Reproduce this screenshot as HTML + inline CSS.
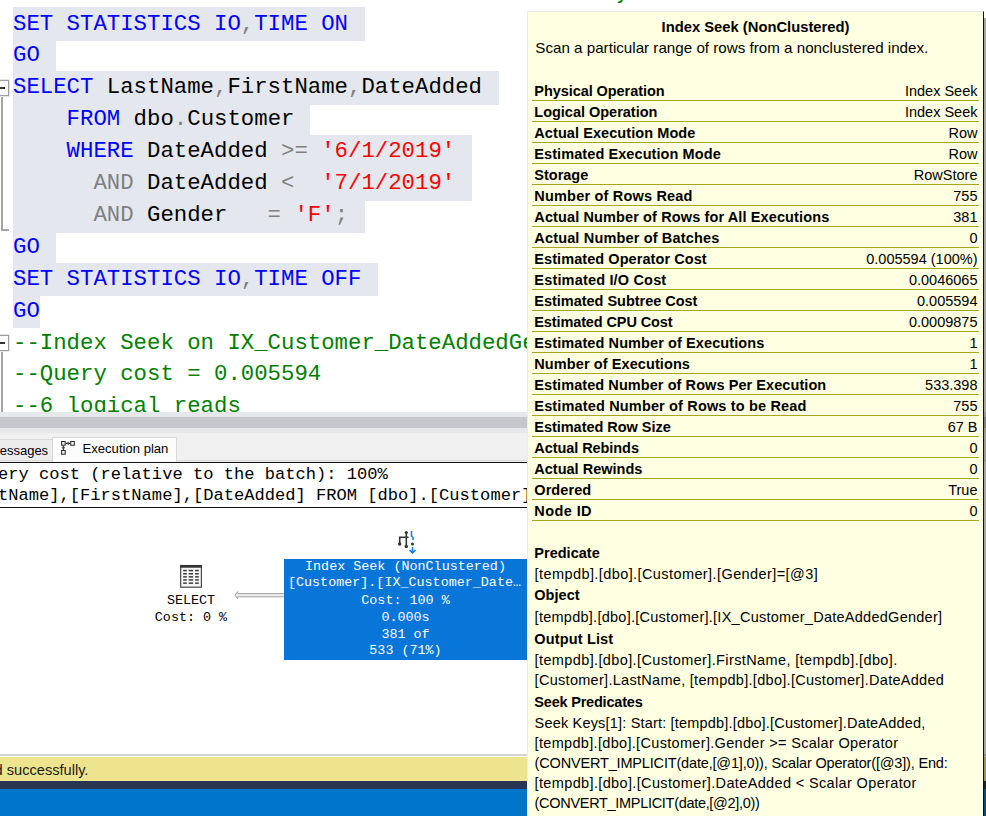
<!DOCTYPE html>
<html><head><meta charset="utf-8">
<style>
html,body{margin:0;padding:0;width:986px;height:816px;overflow:hidden;background:#fff;position:relative}
.a{position:absolute}
.code{font-family:"Liberation Mono",monospace;font-size:22.33px;line-height:31.9px;white-space:pre;left:13px}
.sel{position:absolute;background:#e4e8ee;left:13px}
.k{color:#0000ff}.g{color:#808080}.s{color:#ff0000}.c{color:#008000}.b{color:#000}
.fold{position:absolute;border:1px solid #9c9c9c;box-shadow:0 0 0 0.5px rgba(160,160,160,0.5);background:#fff;width:9.2px;height:13.6px;left:-2px;margin-top:0.4px}
.fold:after{content:"";position:absolute;left:0;top:5.8px;width:6.2px;height:1.8px;background:#333}
.vl{position:absolute;background:#a5a5a5;width:2px;left:1px}
.bx{left:284px;width:243px;text-align:center;font-size:13.4px;line-height:16.8px;color:#fff}
.mono{font-family:"Liberation Mono",monospace;white-space:pre}
.sans{font-family:"Liberation Sans",sans-serif;white-space:pre}
/* TIPCSS */.tk{left:534.3px;font-weight:bold;font-size:14.5px;line-height:20px;color:#000}
.tv{right:8.5px;font-size:14.5px;line-height:20px;color:#000;text-align:right}
.tp{left:534.6px;font-size:14.5px;line-height:20px;color:#000}
.tl{left:532px;width:447px;height:1.3px;background:#aaa31c}
/* TIPCSSEND */
</style></head><body>
<!-- editor selections -->
<div class="sel" style="top:7px;height:34px;width:352px"></div>
<div class="sel" style="top:39px;height:34px;width:43px"></div>
<div class="sel" style="top:71px;height:34px;width:486px"></div>
<div class="sel" style="top:103px;height:34px;width:297px"></div>
<div class="sel" style="top:135px;height:34px;width:459px"></div>
<div class="sel" style="top:167px;height:34px;width:459px"></div>
<div class="sel" style="top:199px;height:34px;width:352px"></div>
<div class="sel" style="top:231px;height:34px;width:43px"></div>
<div class="sel" style="top:263px;height:33px;width:365px"></div>
<div class="sel" style="top:295px;height:33px;width:27px"></div>

<div class="a code" id="code" style="top:-23.4px"><span class="c">                                             y</span>
<span class="k">SET STATISTICS IO</span><span class="g">,</span><span class="k">TIME ON</span>
<span class="k">GO</span>
<span class="k">SELECT</span> LastName<span class="g">,</span>FirstName<span class="g">,</span>DateAdded
    <span class="k">FROM</span> dbo<span class="g">.</span>Customer
    <span class="k">WHERE</span> DateAdded <span class="g">&gt;=</span> <span class="s">'6/1/2019'</span>
      <span class="g">AND</span> DateAdded <span class="g">&lt;</span>  <span class="s">'7/1/2019'</span>
      <span class="g">AND</span> Gender   <span class="g">=</span> <span class="s">'F'</span><span class="g">;</span>
<span class="k">GO</span>
<span class="k">SET STATISTICS IO</span><span class="g">,</span><span class="k">TIME OFF</span>
<span class="k">GO</span>
<span class="c">--Index Seek on IX_Customer_DateAddedGender</span>
<span class="c">--Query cost = 0.005594</span>
<span class="c">--6 logical reads</span></div>
<div class="fold" style="top:80px"></div>
<div class="vl" style="top:97px;height:134px"></div>
<div class="a" style="background:#a5a5a5;left:1px;top:229px;width:8px;height:2px"></div>
<div class="fold" style="top:335px"></div>
<div class="vl" style="top:352px;height:60px"></div>

<!-- splitter -->
<div class="a" style="left:0;top:412px;width:986px;height:5px;background:#e7e8ec"></div>
<div class="a" style="left:0;top:417px;width:986px;height:11px;background:#c5c7cc"></div>
<div class="a" style="left:0;top:428px;width:986px;height:5px;background:#e7e8ec"></div>
<!-- tab strip -->
<div class="a" style="left:0;top:433px;width:986px;height:29px;background:#f0f0f0"></div>
<div class="a" style="left:0;top:460px;width:986px;height:1px;background:#dadada"></div>
<div class="a" style="left:-1px;top:439px;width:53px;height:20px;background:#ececec;border-right:1px solid #d9d9d9;border-top:1px solid #d9d9d9"></div>
<div class="a sans" style="left:-0.3px;top:441.7px;font-size:13px;line-height:18px;color:#000">essages</div>
<div class="a" style="left:52px;top:437px;width:123px;height:25px;background:#fcfcfc;border:1px solid #d9d9d9;border-bottom:none"></div>
<svg class="a" style="left:55px;top:436px" width="30" height="24" viewBox="0 0 30 24">
<g fill="none" stroke="#333" stroke-width="1.1">
<rect x="6.6" y="5.5" width="3.6" height="3.7"/>
<rect x="15.7" y="5.5" width="3.6" height="3.7"/>
<rect x="6.6" y="14.5" width="3.6" height="3.7"/>
<path d="M10.8 7.4H15.2M8.4 9.8V14"/>
</g>
<path d="M11.8 7.4L13.6 6.1V8.7Z M8.4 13.2L7.1 11.3H9.7Z" fill="#444" stroke="#444" stroke-width="0.6"/>
</svg>
<div class="a sans" style="left:82.5px;top:439.7px;font-size:13.1px;line-height:18px;color:#000">Execution plan</div>
<!-- results box -->
<div class="a" style="left:-2px;top:462px;width:600px;height:44px;border-top:1.5px solid #111;border-bottom:1.5px solid #111;background:#fff"></div>
<div class="a mono" style="left:-2px;top:465px;font-size:17.1px;line-height:20.5px;color:#000">ery cost (relative to the batch): 100%
tName],[FirstName],[DateAdded] FROM [dbo].[Customer] WHERE</div>

<!-- plan -->
<svg class="a" style="left:176px;top:561px" width="30" height="30" viewBox="0 0 30 30">
<rect x="4.7" y="4.5" width="20.7" height="21.7" fill="#f6f6f6" stroke="#3a3a3a" stroke-width="1.1"/>
<rect x="4.2" y="4" width="21.7" height="2.7" fill="#333"/>
<g fill="#3c3c3c">
<rect x="7.2" y="8.8" width="3.6" height="1.5"/><rect x="12.7" y="8.8" width="4.4" height="1.5"/><rect x="19.1" y="8.8" width="3.7" height="1.5"/>
<rect x="7.2" y="12" width="3.6" height="1.5"/><rect x="12.7" y="12" width="4.4" height="1.5"/><rect x="19.1" y="12" width="3.7" height="1.5"/>
<rect x="7.2" y="15.1" width="3.6" height="1.5"/><rect x="12.7" y="15.1" width="4.4" height="1.5"/><rect x="19.1" y="15.1" width="3.7" height="1.5"/>
<rect x="7.2" y="18.2" width="3.6" height="1.5"/><rect x="12.7" y="18.2" width="4.4" height="1.5"/><rect x="19.1" y="18.2" width="3.7" height="1.5"/>
<rect x="7.2" y="21.4" width="3.6" height="1.5"/><rect x="12.7" y="21.4" width="4.4" height="1.5"/><rect x="19.1" y="21.4" width="3.7" height="1.5"/>
</g>
</svg>
<div class="a mono" style="left:141px;top:593px;width:100px;text-align:center;font-size:13.4px;line-height:16.8px;color:#000">SELECT
Cost: 0 %</div>
<svg class="a" style="left:233px;top:589.6px" width="52" height="11" viewBox="0 0 52 11">
<path d="M2 5.2L4.7 1.6V3.6H51.5V6.8H4.7V8.8Z" fill="#ececec" stroke="#a3a3a3" stroke-width="1"/>
</svg>
<svg class="a" style="left:395px;top:528px" width="24" height="28" viewBox="0 0 24 28">
<g stroke="#333" stroke-width="1.6" fill="none">
<path d="M11.3 4.5V18.5M4.7 16V9.3H13.5"/>
</g>
<g fill="#333"><circle cx="11.3" cy="4.5" r="1.6"/><circle cx="11.3" cy="18.5" r="1.7"/><circle cx="4.7" cy="16" r="1.7"/><circle cx="17.5" cy="16" r="1.5"/></g>
<path d="M16.5 3V8L18 9.5V12" stroke="#1f7fd8" stroke-width="1.6" fill="none"/>
<path d="M17.5 19V25M14.5 22L17.5 25L20.5 22" stroke="#1f7fd8" stroke-width="1.6" fill="none"/>
</svg>
<div class="a" style="left:284px;top:559px;width:243px;height:101px;background:#0875d9"></div>
<div class="a mono bx" style="top:558.8px">Index Seek (NonClustered)</div>
<div class="a mono bx" style="top:574.9px"><span style="margin-left:-2px">[Customer].[IX_Customer_Date…</span></div>
<div class="a mono bx" style="top:593.2px">Cost: 100 %</div>
<div class="a mono bx" style="top:610.0px">0.000s</div>
<div class="a mono bx" style="top:626.8px">381 of</div>
<div class="a mono bx" style="top:642.6px">533 (71%)</div>

<!-- status -->
<div class="a" style="left:0;top:754px;width:986px;height:2px;background:#d4d4d4"></div>
<div class="a" style="left:0;top:757px;width:986px;height:24px;background:#efe48e"></div>
<div class="a sans" style="left:-5.4px;top:761.5px;font-size:14.6px;line-height:16px;color:#1a1a1a">d successfully.</div>
<div class="a" style="left:0;top:781px;width:986px;height:8px;background:#293550"></div>
<div class="a" style="left:0;top:789px;width:986px;height:27px;background:#0076cb"></div>

<!-- tooltip -->
<div class="a" id="tip" style="left:527px;top:11px;width:455px;height:810px;background:#ffffe1;border:1px solid #ececec;border-right:1px solid #111"></div>
<div class="a" style="left:984px;top:18px;width:2px;height:800px;background:rgba(0,0,0,0.35)"></div>
<!-- TIPSTART -->
<div class="a sans" style="left:528px;top:17.2px;width:455px;text-align:center;font-weight:bold;font-size:14.78px;line-height:20px;color:#000">Index Seek (NonClustered)</div>
<div class="a sans" id="desc" style="left:535.3px;top:37.6px;font-size:15.18px;line-height:20px;color:#000">Scan a particular range of rows from a nonclustered index.</div>
<div class="a sans tk" id="k0" style="top:81.2px;letter-spacing:-0.064px">Physical Operation</div>
<div class="a sans tv" id="v0" style="top:81.2px">Index Seek</div>
<div class="a tl" style="top:100.2px"></div>
<div class="a sans tk" id="k1" style="top:102.2px;letter-spacing:-0.010px">Logical Operation</div>
<div class="a sans tv" id="v1" style="top:102.2px">Index Seek</div>
<div class="a tl" style="top:121.2px"></div>
<div class="a sans tk" id="k2" style="top:123.2px;letter-spacing:0.075px">Actual Execution Mode</div>
<div class="a sans tv" id="v2" style="top:123.2px">Row</div>
<div class="a tl" style="top:142.2px"></div>
<div class="a sans tk" id="k3" style="top:144.2px;letter-spacing:0.083px">Estimated Execution Mode</div>
<div class="a sans tv" id="v3" style="top:144.2px">Row</div>
<div class="a tl" style="top:163.2px"></div>
<div class="a sans tk" id="k4" style="top:165.2px">Storage</div>
<div class="a sans tv" id="v4" style="top:165.2px">RowStore</div>
<div class="a tl" style="top:184.2px"></div>
<div class="a sans tk" id="k5" style="top:186.2px;letter-spacing:0.191px">Number of Rows Read</div>
<div class="a sans tv" id="v5" style="top:186.2px">755</div>
<div class="a tl" style="top:205.2px"></div>
<div class="a sans tk" id="k6" style="top:207.2px;letter-spacing:0.118px">Actual Number of Rows for All Executions</div>
<div class="a sans tv" id="v6" style="top:207.2px">381</div>
<div class="a tl" style="top:226.2px"></div>
<div class="a sans tk" id="k7" style="top:228.2px;letter-spacing:0.158px">Actual Number of Batches</div>
<div class="a sans tv" id="v7" style="top:228.2px">0</div>
<div class="a tl" style="top:247.2px"></div>
<div class="a sans tk" id="k8" style="top:249.2px;letter-spacing:0.069px">Estimated Operator Cost</div>
<div class="a sans tv" id="v8" style="top:249.2px">0.005594 (100%)</div>
<div class="a tl" style="top:268.2px"></div>
<div class="a sans tk" id="k9" style="top:270.2px;letter-spacing:0.176px">Estimated I/O Cost</div>
<div class="a sans tv" id="v9" style="top:270.2px">0.0046065</div>
<div class="a tl" style="top:289.2px"></div>
<div class="a sans tk" id="k10" style="top:291.2px;letter-spacing:-0.021px">Estimated Subtree Cost</div>
<div class="a sans tv" id="v10" style="top:291.2px">0.005594</div>
<div class="a tl" style="top:310.2px"></div>
<div class="a sans tk" id="k11" style="top:312.2px;letter-spacing:-0.116px">Estimated CPU Cost</div>
<div class="a sans tv" id="v11" style="top:312.2px">0.0009875</div>
<div class="a tl" style="top:331.2px"></div>
<div class="a sans tk" id="k12" style="top:333.2px;letter-spacing:0.096px">Estimated Number of Executions</div>
<div class="a sans tv" id="v12" style="top:333.2px">1</div>
<div class="a tl" style="top:352.2px"></div>
<div class="a sans tk" id="k13" style="top:354.2px;letter-spacing:0.090px">Number of Executions</div>
<div class="a sans tv" id="v13" style="top:354.2px">1</div>
<div class="a tl" style="top:373.2px"></div>
<div class="a sans tk" id="k14" style="top:375.2px;letter-spacing:0.072px">Estimated Number of Rows Per Execution</div>
<div class="a sans tv" id="v14" style="top:375.2px">533.398</div>
<div class="a tl" style="top:394.2px"></div>
<div class="a sans tk" id="k15" style="top:396.2px;letter-spacing:0.157px">Estimated Number of Rows to be Read</div>
<div class="a sans tv" id="v15" style="top:396.2px">755</div>
<div class="a tl" style="top:415.2px"></div>
<div class="a sans tk" id="k16" style="top:417.2px;letter-spacing:-0.032px">Estimated Row Size</div>
<div class="a sans tv" id="v16" style="top:417.2px">67 B</div>
<div class="a tl" style="top:436.2px"></div>
<div class="a sans tk" id="k17" style="top:438.2px;letter-spacing:-0.068px">Actual Rebinds</div>
<div class="a sans tv" id="v17" style="top:438.2px">0</div>
<div class="a tl" style="top:457.2px"></div>
<div class="a sans tk" id="k18" style="top:459.2px;letter-spacing:0.003px">Actual Rewinds</div>
<div class="a sans tv" id="v18" style="top:459.2px">0</div>
<div class="a tl" style="top:478.2px"></div>
<div class="a sans tk" id="k19" style="top:480.2px;letter-spacing:0.071px">Ordered</div>
<div class="a sans tv" id="v19" style="top:480.2px">True</div>
<div class="a tl" style="top:499.2px"></div>
<div class="a sans tk" id="k20" style="top:501.2px;letter-spacing:0.417px">Node ID</div>
<div class="a sans tv" id="v20" style="top:501.2px">0</div>
<div class="a tl" style="top:520.2px"></div>
<div class="a sans tk" id="p0" style="top:542.6px;letter-spacing:0.023px">Predicate</div>
<div class="a sans tp" id="p1" style="top:563.6px;letter-spacing:0.413px">[tempdb].[dbo].[Customer].[Gender]=[@3]</div>
<div class="a sans tk" id="p2" style="top:585.2px;letter-spacing:0.028px">Object</div>
<div class="a sans tp" id="p3" style="top:606.7px;letter-spacing:0.262px">[tempdb].[dbo].[Customer].[IX_Customer_DateAddedGender]</div>
<div class="a sans tk" id="p4" style="top:628.9px;letter-spacing:0.153px">Output List</div>
<div class="a sans tp" id="p5" style="top:649.8px;letter-spacing:0.379px">[tempdb].[dbo].[Customer].FirstName, [tempdb].[dbo].</div>
<div class="a sans tp" id="p6" style="top:669.9px;letter-spacing:0.291px">[Customer].LastName, [tempdb].[dbo].[Customer].DateAdded</div>
<div class="a sans tk" id="p7" style="top:691.6px;letter-spacing:-0.203px">Seek Predicates</div>
<div class="a sans tp" id="p8" style="top:712.8px;letter-spacing:0.182px">Seek Keys[1]: Start: [tempdb].[dbo].[Customer].DateAdded,</div>
<div class="a sans tp" id="p9" style="top:733.2px;letter-spacing:0.320px">[tempdb].[dbo].[Customer].Gender &gt;= Scalar Operator</div>
<div class="a sans tp" id="p10" style="top:753.1px;letter-spacing:-0.170px">(CONVERT_IMPLICIT(date,[@1],0)), Scalar Operator([@3]), End:</div>
<div class="a sans tp" id="p11" style="top:772.9px;letter-spacing:0.359px">[tempdb].[dbo].[Customer].DateAdded &lt; Scalar Operator</div>
<div class="a sans tp" id="p12" style="top:792.5px;letter-spacing:-0.307px">(CONVERT_IMPLICIT(date,[@2],0))</div>
<!-- TIPEND -->
</body></html>
